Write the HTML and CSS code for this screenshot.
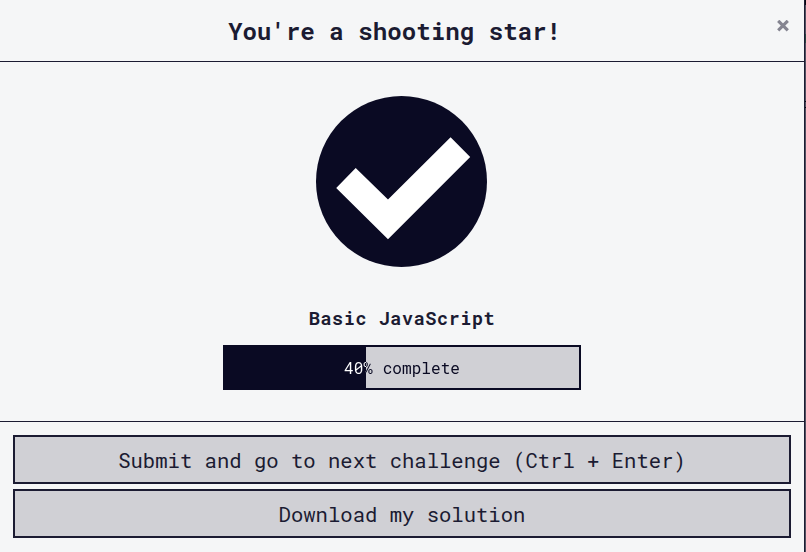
FILE: index.html
```html
<!DOCTYPE html>
<html lang="en">
<head>
<meta charset="utf-8">
<title>Challenge complete</title>
<link rel="stylesheet" href="styles.css">
</head>
<body>
<div class="modal">
  <header class="modal-header">
    <h1 class="title">You're a shooting star!</h1>
    <button class="close" aria-label="Close"><svg width="12" height="12" viewBox="0 0 12 12"><path d="M1.2 .8 10.8 10.4M10.8 .8 1.2 10.4"/></svg></button>
  </header>
  <main class="modal-body">
    <svg class="check" width="172" height="172" viewBox="0 0 172 172">
      <circle cx="85.5" cy="85.5" r="85.5" fill="#0a0a23"/>
      <path d="M20.2 92 39.7 72.1 72 103.5 134.6 41.3 154.2 61 72 143.3Z" fill="#fff"/>
    </svg>
    <h2 class="block-name">Basic JavaScript</h2>
    <div class="progress"><span class="progress-label">40% complete</span></div>
  </main>
  <footer class="modal-footer">
    <button class="btn">Submit and go to next challenge (Ctrl + Enter)</button>
    <button class="btn">Download my solution</button>
  </footer>
</div>
</body>
</html>
```
FILE: styles.css
```css
* { box-sizing: border-box; }
body {
  margin: 0;
  height: 552px;
  overflow: hidden;
  background: linear-gradient(#05050f 5px, #50505f 5px 34px, #25443f 34px 43px, #50505f 43px 101px, #05050f 101px 102px, #50505f 102px 107px, #05050f 107px 108px, #50505f 108px);
  color: #1b1b32;
  font-family: "Roboto Mono", "DejaVu Sans Mono", monospace;
}
.modal {
  width: 805px;
  height: 552px;
  display: flex;
  flex-direction: column;
  background: #f5f6f7;
  border-right: 1px solid #1b1b32;
}
.modal-header {
  position: relative;
  height: 62px;
  padding-right: 15px;
  border-bottom: 1px solid #1b1b32;
  display: flex;
  align-items: center;
  justify-content: center;
}
.title { margin: 0; font-size: 24.15px; line-height: 34px; font-weight: 700; white-space: nowrap; }
.close {
  position: absolute;
  top: 20px;
  right: 15px;
  padding: 0;
  border: 0;
  background: none;
  line-height: 0;
}
.close path { fill: none; stroke: #858591; stroke-width: 3.1; }
.modal-body {
  height: 360px;
  padding: 34px 1px 0 0;
  border-bottom: 1px solid #1b1b32;
  display: flex;
  flex-direction: column;
  align-items: center;
}
.check { display: block; }
.block-name { margin: 37px 0 0; padding-left: 1px; font-size: 18.5px; line-height: 26px; letter-spacing: 0.55px; font-weight: 700; }
.progress {
  width: 358px;
  height: 45px;
  margin-top: 14px;
  border: 2px solid #0a0a23;
  background: linear-gradient(90deg, #0a0a23 141px, #d0d0d5 141px);
}
.progress-label {
  display: block;
  padding-left: 1px;
  font-size: 16.1px;
  line-height: 42px;
  text-align: center;
  color: transparent;
  background: linear-gradient(90deg, #fff 141px, #0a0a23 141px);
  -webkit-background-clip: text;
  background-clip: text;
}
.modal-footer { padding: 13px; display: flex; flex-direction: column; gap: 5px; }
.btn {
  height: 49px;
  padding: 0;
  border: 2px solid #1b1b32;
  border-radius: 0;
  background: #d0d0d5;
  color: #1b1b32;
  font: 20.57px/28px "Roboto Mono", "DejaVu Sans Mono", monospace;
}
```
